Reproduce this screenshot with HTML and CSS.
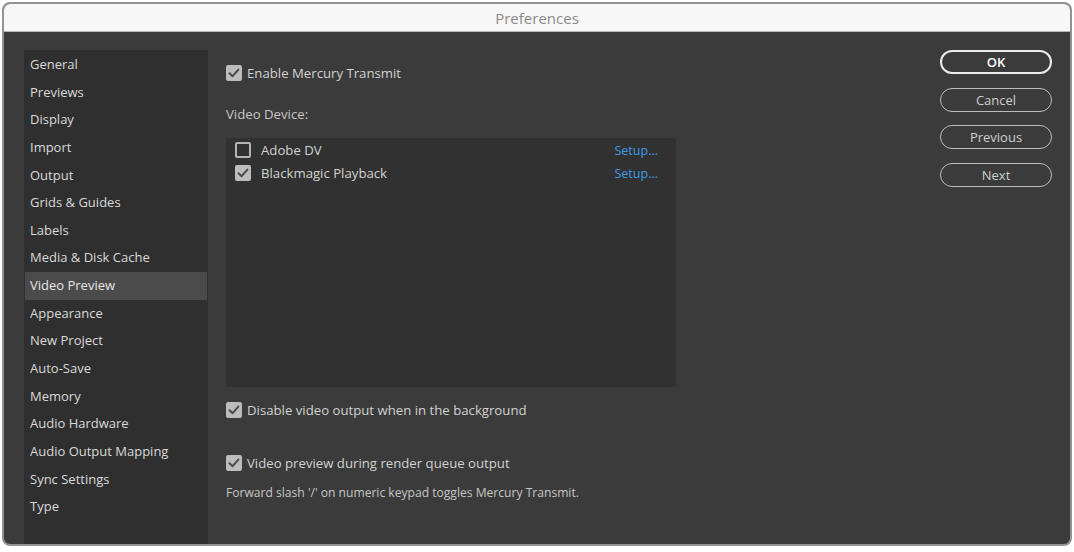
FILE: index.html
```html
<!DOCTYPE html>
<html lang="en">
<head>
  <meta charset="UTF-8" />
  <title>Preferences</title>
  <link rel="stylesheet" href="styles.css">
</head>
<body>

  <div class="prefs-window">
    <div class="title-bar">Preferences</div>

    <div class="prefs-body">
      <ul class="side-nav">
        <li>General</li>
        <li>Previews</li>
        <li>Display</li>
        <li>Import</li>
        <li>Output</li>
        <li>Grids &amp; Guides</li>
        <li>Labels</li>
        <li>Media &amp; Disk Cache</li>
        <li class="active">Video Preview</li>
        <li>Appearance</li>
        <li>New Project</li>
        <li>Auto-Save</li>
        <li>Memory</li>
        <li>Audio Hardware</li>
        <li>Audio Output Mapping</li>
        <li>Sync Settings</li>
        <li>Type</li>
      </ul>

      <div class="pane">
        <label class="check-row first">
          <span class="box checked"><svg viewBox="0 0 16 16"><path d="M3.5 8.2 L6.6 11.2 L12.4 4.6" /></svg></span>
          Enable Mercury Transmit
        </label>

        <div class="section-label">Video Device:</div>

        <div class="device-list">
          <div class="device-row">
            <span class="box"></span>
            <span class="device-name">Adobe DV</span>
            <a class="setup-link">Setup...</a>
          </div>
          <div class="device-row">
            <span class="box checked"><svg viewBox="0 0 16 16"><path d="M3.5 8.2 L6.6 11.2 L12.4 4.6" /></svg></span>
            <span class="device-name">Blackmagic Playback</span>
            <a class="setup-link">Setup...</a>
          </div>
        </div>

        <label class="check-row after-list">
          <span class="box checked"><svg viewBox="0 0 16 16"><path d="M3.5 8.2 L6.6 11.2 L12.4 4.6" /></svg></span>
          Disable video output when in the background
        </label>

        <label class="check-row render-row">
          <span class="box checked"><svg viewBox="0 0 16 16"><path d="M3.5 8.2 L6.6 11.2 L12.4 4.6" /></svg></span>
          Video preview during render queue output
        </label>

        <p class="hint">Forward slash '/' on numeric keypad toggles Mercury Transmit.</p>
      </div>

      <div class="actions">
        <button class="btn primary">OK</button>
        <button class="btn">Cancel</button>
        <button class="btn">Previous</button>
        <button class="btn">Next</button>
      </div>
    </div>
  </div>

</body>
</html>
```

FILE: styles.css
```css
body {
  margin: 0;
  background: #ffffff;
  font-family: "Open Sans", "Noto Sans", sans-serif;
}
.prefs-window {
  margin: 2px 0 0 2px;
  width: 1066px;
  height: 540px;
  border: 2px solid #929292;
  border-radius: 8px;
  overflow: hidden;
  display: flex;
  flex-direction: column;
  background: #3a3b3a;
}
.title-bar {
  height: 27px;
  line-height: 28px;
  background: #f7f7f7;
  border-bottom: 1px solid #b5b5b5;
  text-align: center;
  color: #8a8a8a;
  font-size: 15px;
}
.prefs-body {
  flex: 1;
  display: flex;
  padding-top: 18px;
}
.side-nav {
  list-style: none;
  margin: 0 0 0 20px;
  padding: 1px 1px 0 1px;
  width: 182px;
  background: #2f2f2f;
}
.side-nav li {
  height: 27.65px;
  line-height: 27.65px;
  padding-left: 5px;
  color: #dadada;
  font-size: 13px;
}
.side-nav li.active {
  background: #4b4b4b;
  color: #e6e6e6;
}
.pane {
  width: 450px;
  margin-left: 18px;
  padding-top: 15px;
  color: #d2d2d2;
  font-size: 13.2px;
}
.check-row {
  display: flex;
  align-items: center;
  gap: 5px;
  height: 16px;
}
.box {
  width: 16px;
  height: 16px;
  box-sizing: border-box;
  border: 2px solid #b4b4b4;
  border-radius: 2px;
  flex-shrink: 0;
}
.box.checked {
  background: #bcbcbc;
  border-color: #bcbcbc;
}
.box svg {
  display: block;
  width: 16px;
  height: 16px;
  margin: -2px;
}
.box svg path {
  fill: none;
  stroke: #4a4a4a;
  stroke-width: 2;
  stroke-linecap: round;
  stroke-linejoin: round;
}
.section-label {
  margin-top: 25px;
  height: 16px;
  line-height: 16px;
  color: #c8c8c8;
}
.device-list {
  margin-top: 16px;
  height: 249px;
  box-sizing: border-box;
  padding: 4px 18px 0 9px;
  background: #313131;
  border-radius: 3px;
}
.device-row {
  display: flex;
  align-items: center;
  height: 16px;
  margin-bottom: 7px;
}
.device-name {
  margin-left: 10px;
  flex: 1;
}
.setup-link {
  color: #3e9be4;
  font-size: 12.5px;
}
.after-list {
  margin-top: 15px;
}
.render-row {
  margin-top: 37px;
}
.hint {
  margin: 14px 0 0 0;
  font-size: 12.1px;
  line-height: 16px;
  color: #c6c6c6;
}
.actions {
  margin-left: auto;
  margin-right: 18px;
  display: flex;
  flex-direction: column;
  gap: 13.7px;
  width: 112px;
}
.btn {
  height: 24px;
  border: 1.5px solid #bdbdbd;
  border-radius: 12px;
  background: transparent;
  color: #cfcfcf;
  font-family: "Open Sans", "Noto Sans", sans-serif;
  font-size: 13px;
  padding: 0;
}
.btn.primary {
  border: 2px solid #ececec;
  color: #ffffff;
  font-weight: 600;
}
```
